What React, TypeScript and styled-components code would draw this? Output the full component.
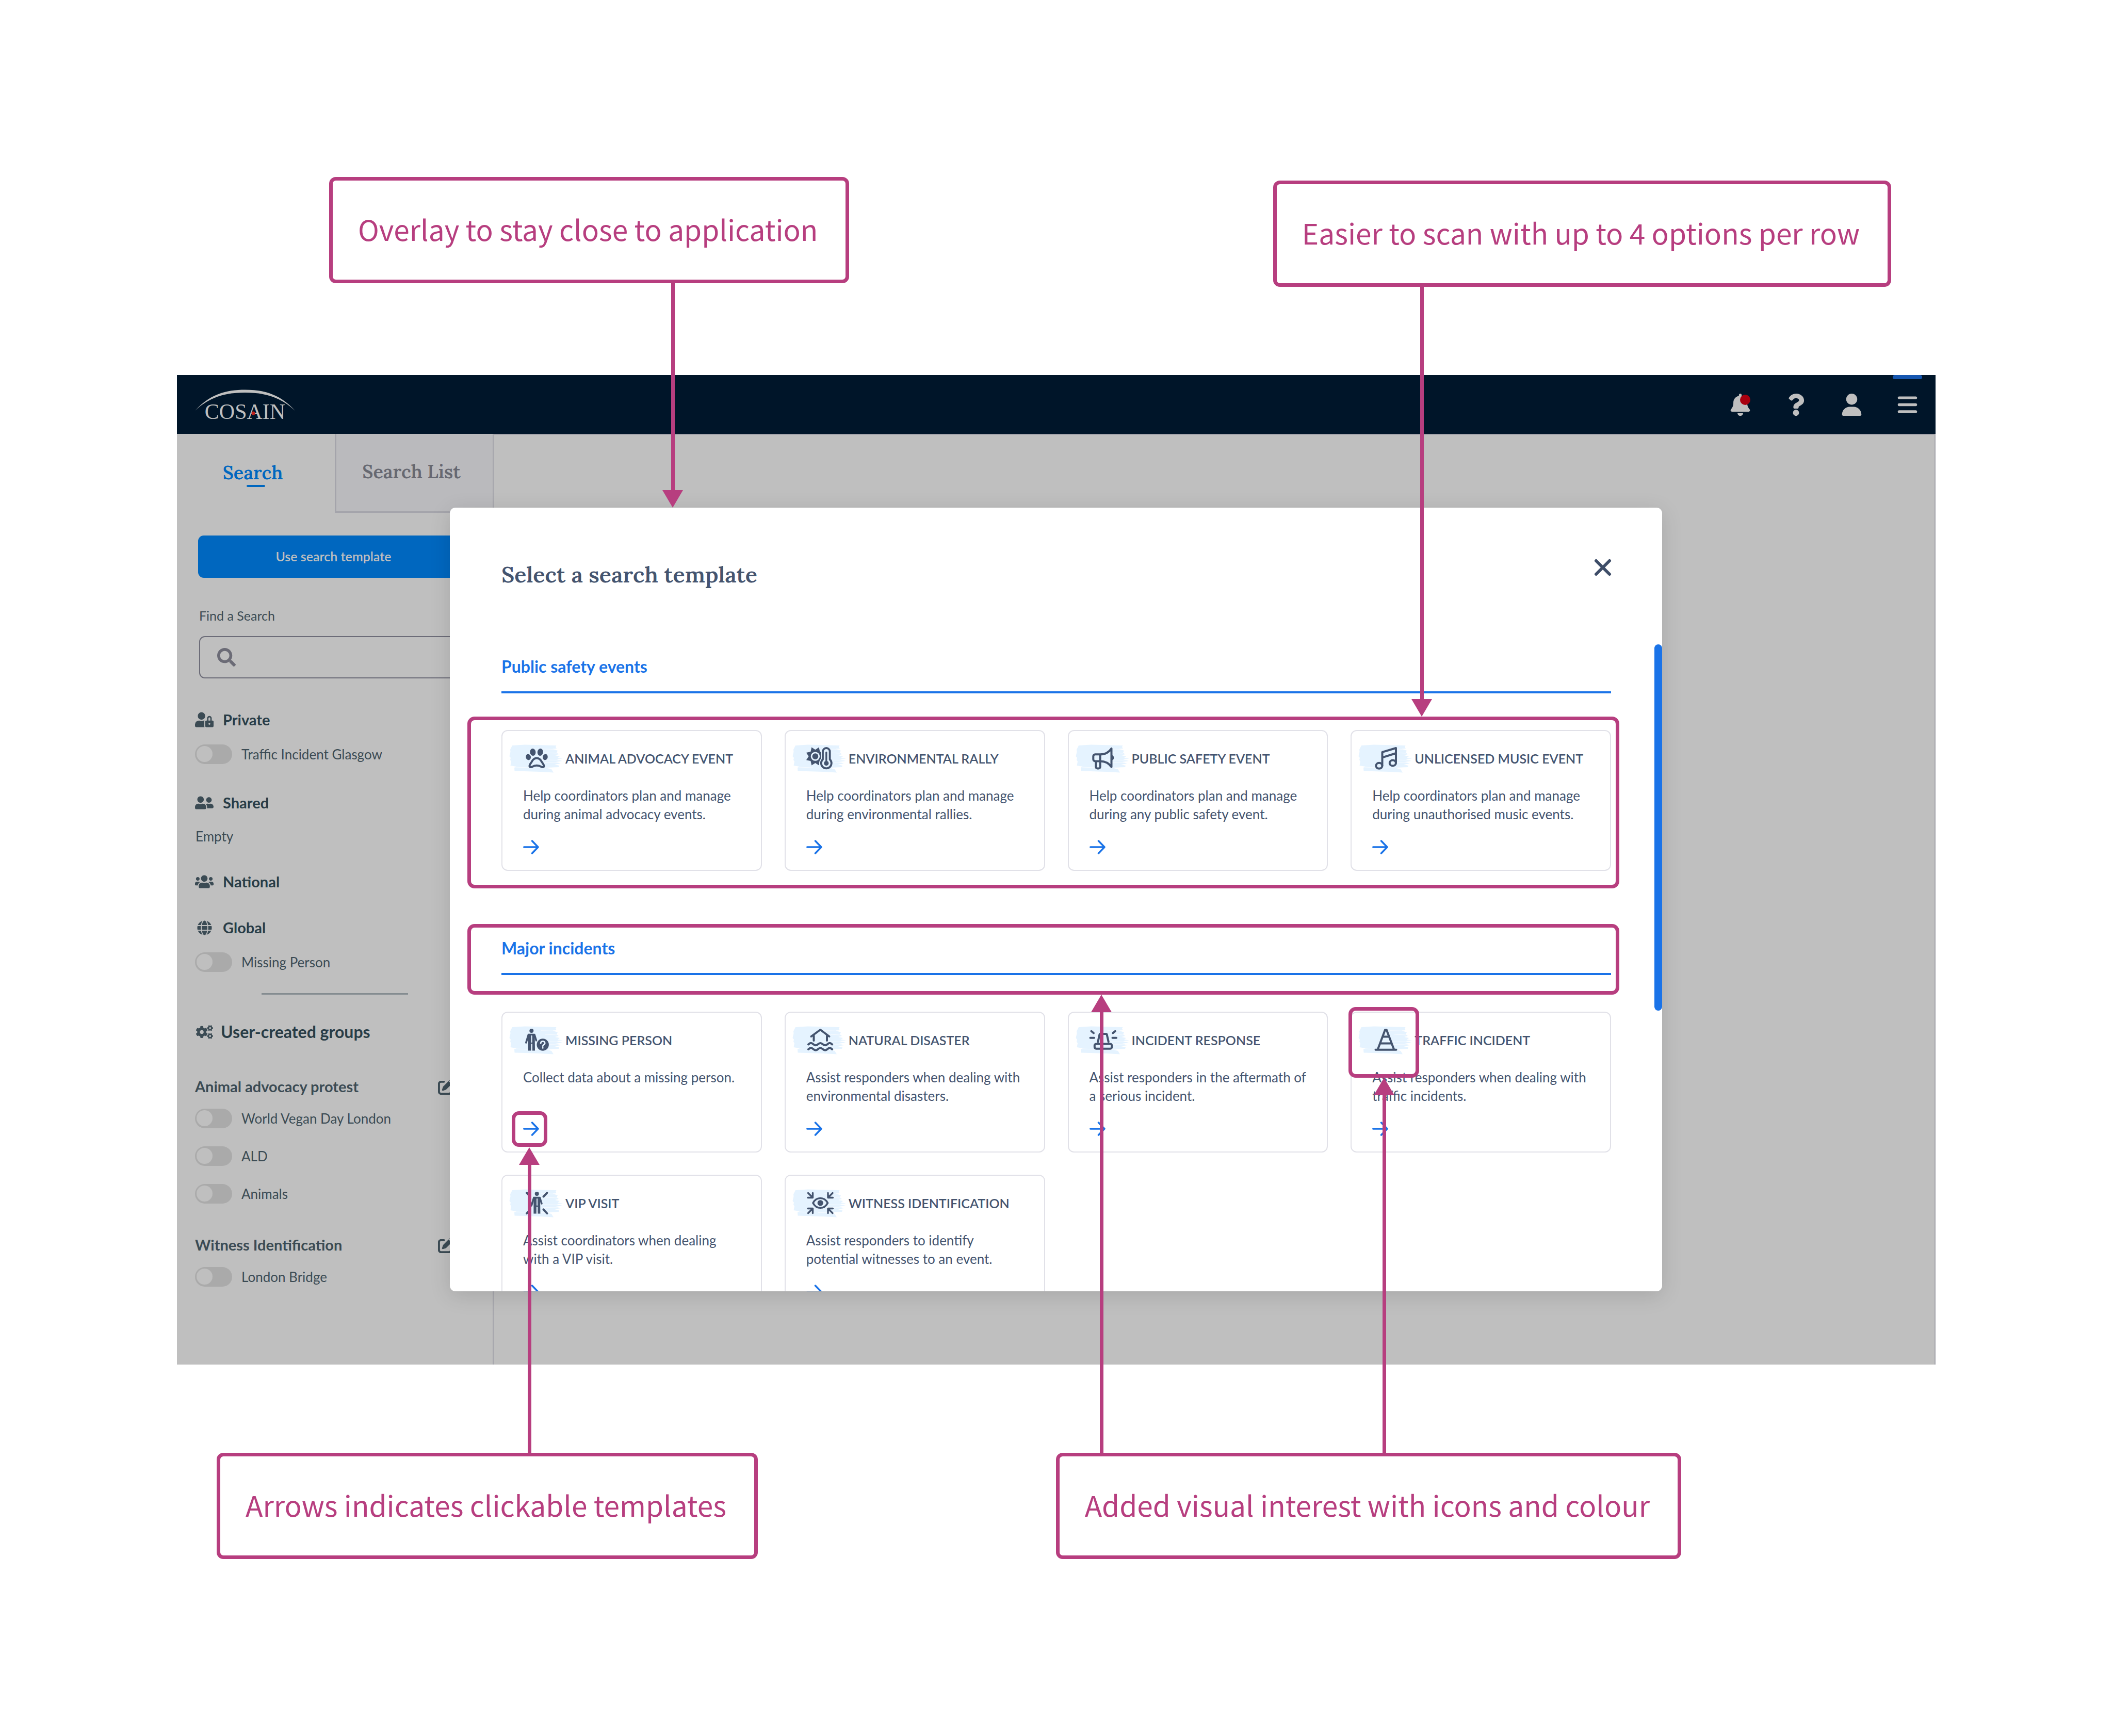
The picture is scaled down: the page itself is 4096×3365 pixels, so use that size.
import React from "react";
import styled, { createGlobalStyle } from "styled-components";
import { FaBell, FaUser, FaBars, FaPenToSquare } from "react-icons/fa6";
import { FaQuestion, FaSearch, FaUserLock, FaUserFriends, FaUsers, FaGlobe, FaCogs } from "react-icons/fa";

const accent = "#b73e7f";
const blue = "#1a73e8";
const slate = "#44546f";
const dim = "#bfbfbf";
const line = "#a4a4ab";
const wash = "#e5f3ff";

const sans = `Lato, "Liberation Sans", sans-serif`;
const serif = `Lora, "Noto Serif", "Liberation Serif", serif`;
const note = `"Source Sans Pro", "Noto Sans CJK SC", "Noto Sans", sans-serif`;

const GlobalStyle = createGlobalStyle`
  *, *::before, *::after { box-sizing: border-box; }
  body { margin: 0; background: #fff; font-family: ${sans}; color: ${slate}; }
  h1, h2, h3, p, ul { margin: 0; padding: 0; font-weight: inherit; }
  ul { list-style: none; }
  button { border: 0; padding: 0; background: none; font: inherit; color: inherit; cursor: pointer; }
`;

/* ---------- page and callouts ---------- */

const Page = styled.div`
  min-height: 100vh;
  padding: 343px 344px 343px 343px;
`;

const CalloutRow = styled.div<{ $side: "top" | "bottom" }>`
  display: flex;
  justify-content: space-between;
  align-items: flex-start;
  padding: ${(p) => (p.$side === "top" ? "0 86px 0 295px" : "0 493px 0 77px")};
  margin: ${(p) => (p.$side === "top" ? "0 0 171px" : "171px 0 0")};
`;

const Callout = styled.p<{ $lowered?: boolean }>`
  margin-top: ${(p) => (p.$lowered ? "7px" : "0")};
  padding: 51px 54px 57px 49px;
  border: 7px solid ${accent};
  border-radius: 13px;
  background: #fff;
  color: ${accent};
  font-family: ${note};
  font-size: 55px;
  line-height: 84px;
  white-space: nowrap;
`;

/* ---------- application shell ---------- */

const Shell = styled.div`
  background: ${dim};
`;

const TopBar = styled.header`
  display: flex;
  align-items: stretch;
  justify-content: space-between;
  height: 114px;
  padding: 0 26px 0 35px;
  background: #001529;
`;

const Logo = styled.svg`
  width: 194px;
  height: 114px;
`;

const TopActions = styled.nav`
  display: flex;
  gap: 51px;
`;

const TopAction = styled.button<{ $active?: boolean }>`
  display: flex;
  align-items: center;
  justify-content: center;
  position: relative;
  width: 57px;
  color: ${dim};
  font-size: 43px;

  &::before {
    content: "";
    display: ${(p) => (p.$active ? "block" : "none")};
    position: absolute;
    top: 0;
    left: 0;
    right: 0;
    height: 8px;
    border-radius: 4px;
    background: #1556b0;
  }
`;

const AlertDot = styled.span`
  position: absolute;
  top: 38px;
  right: 9px;
  width: 20px;
  height: 20px;
  border-radius: 50%;
  background: #a8000f;
`;

const Body = styled.div`
  display: flex;
  position: relative;
`;

const Sidebar = styled.aside`
  width: 612px;
  padding-bottom: 151px;
  color: #3b4b54;
`;

const Canvas = styled.div`
  flex: 1;
  border: 2px solid ${line};
  border-bottom: 0;
`;

const Tabs = styled.div`
  display: grid;
  grid-template-columns: 306px 1fr;
  height: 153px;
`;

const Tab = styled.button<{ $active?: boolean }>`
  position: relative;
  padding: 0 12px 4px 0;
  border: 0 solid ${line};
  border-width: ${(p) => (p.$active ? "0" : "0 0 3px 3px")};
  background: ${(p) => (p.$active ? "transparent" : "#bababd")};
  color: ${(p) => (p.$active ? "#0067bf" : "#666871")};
  font-family: ${serif};
  font-size: 36px;
  font-weight: 600;

  &::after {
    content: "";
    display: ${(p) => (p.$active ? "block" : "none")};
    position: absolute;
    left: 50%;
    bottom: 50px;
    width: 36px;
    height: 4px;
    margin-left: -18px;
    border-radius: 2px;
    background: #0067bf;
  }
`;

const SearchPanel = styled.div`
  padding: 44px 46px 0 41px;
`;

const TemplateButton = styled.button`
  width: 100%;
  height: 82px;
  padding-bottom: 2px;
  border-radius: 11px;
  background: #0067bf;
  color: ${dim};
  font-size: 25px;
  font-weight: 600;
`;

const FieldLabel = styled.label`
  display: block;
  margin: 57px 0 24px 2px;
  font-size: 25px;
  line-height: 32px;
`;

const SearchField = styled.div`
  display: flex;
  align-items: center;
  gap: 20px;
  height: 82px;
  margin-left: 2px;
  padding: 0 33px;
  border: 2px solid #6c6c78;
  border-radius: 11px;
  color: #6b6b76;
  font-size: 36px;
`;

const SearchInput = styled.input`
  flex: 1;
  min-width: 0;
  border: 0;
  outline: 0;
  background: transparent;
  color: #3b4b54;
  font: 25px ${sans};
`;

const Group = styled.section<{ $gap: number }>`
  margin-top: ${(p) => p.$gap}px;
  padding: 0 75px 0 35px;
`;

const GroupTitle = styled.h3<{ $large?: boolean }>`
  display: flex;
  align-items: center;
  gap: ${(p) => (p.$large ? 14 : 18)}px;
  color: #283c46;
  font-size: ${(p) => (p.$large ? 32 : 29)}px;
  font-weight: 700;
  line-height: ${(p) => (p.$large ? 38 : 36)}px;
`;

const GroupIcon = styled.span`
  display: flex;
  justify-content: center;
  width: 36px;
  color: #3b4b54;
  font-size: 29px;
`;

const CustomTitle = styled.h3`
  display: flex;
  align-items: center;
  justify-content: space-between;
  font-size: 29px;
  font-weight: 700;
  line-height: 36px;
`;

const EditButton = styled.button`
  display: flex;
  font-size: 31px;
`;

const ToggleList = styled.ul<{ $tight?: boolean }>`
  display: grid;
  gap: 35px;
  margin-top: ${(p) => (p.$tight ? 25 : 30)}px;
`;

const ToggleLabel = styled.label`
  display: flex;
  align-items: center;
  gap: 18px;
  height: 38px;
  font-size: 26px;
`;

const Toggle = styled.input`
  appearance: none;
  width: 72px;
  height: 38px;
  margin: 0;
  border-radius: 19px;
  background: #aaa;

  &::before {
    content: "";
    display: block;
    width: 31px;
    height: 31px;
    margin: 3px;
    border-radius: 50%;
    background: ${dim};
  }

  &:checked::before {
    margin-left: 38px;
  }
`;

const EmptyNote = styled.p`
  margin-top: 30px;
  padding-left: 1px;
  font-size: 26px;
  line-height: 34px;
`;

const Divider = styled.hr`
  width: 284px;
  height: 3px;
  margin: 41px 0 0 164px;
  border: 0;
  background: #848c90;
`;

/* ---------- dialog ---------- */

const DialogFrame = styled.div`
  position: absolute;
  top: 143px;
  bottom: 142px;
  left: 529px;
  right: 530px;
`;

const Dialog = styled.section`
  display: flex;
  flex-direction: column;
  position: relative;
  height: 100%;
  border-radius: 11px;
  background: #fff;
  box-shadow: 0 8px 40px rgba(0, 0, 0, 0.13);
  overflow: hidden;
`;

const DialogHeader = styled.div`
  display: flex;
  align-items: flex-start;
  justify-content: space-between;
  padding: 99px 98px 110px 100px;
`;

const DialogTitle = styled.h2`
  margin-top: 5px;
  font-family: ${serif};
  font-size: 43px;
  font-weight: 600;
  line-height: 51px;
`;

const CloseButton = styled.button`
  display: flex;
  color: #3e4d68;
`;

const DialogBody = styled.div`
  flex: 1;
  min-height: 0;
  position: relative;
  padding: 23px 99px 0 100px;
  overflow: hidden;
`;

const ScrollThumb = styled.div`
  position: absolute;
  top: 0;
  right: 0;
  width: 15px;
  height: 710px;
  border-radius: 8px;
  background: ${blue};
`;

const Category = styled.section`
  & + & {
    margin-top: 130px;
  }
`;

const CategoryTitle = styled.h3`
  padding-bottom: 28px;
  border-bottom: 4px solid ${blue};
  color: ${blue};
  font-size: 32px;
  font-weight: 700;
  line-height: 40px;
`;

const CardGrid = styled.div`
  display: grid;
  grid-template-columns: repeat(4, 1fr);
  gap: 43px 44px;
  margin-top: 71px;
`;

const Card = styled.article`
  padding: 25px 13px 30px;
  border: 2px solid #e1e1e8;
  border-radius: 12px;
`;

const CardHead = styled.div`
  display: flex;
  align-items: center;
  gap: 5px;
`;

const CardIcon = styled.svg`
  flex: none;
  width: 104px;
  height: 56px;
`;

const CardTitle = styled.h3`
  font-size: 25px;
  font-weight: 600;
  line-height: 36px;
  text-transform: uppercase;
  white-space: nowrap;
`;

const CardText = styled.p`
  min-height: 72px;
  margin: 26px 27px 0;
  font-size: 26px;
  line-height: 36px;
`;

const CardLink = styled.a`
  display: block;
  width: 31px;
  height: 28px;
  margin: 32px 27px 0;
  color: ${blue};
`;

/* ---------- annotations over the dialog ---------- */

const NoteLayer = styled.div`
  position: absolute;
  inset: 0;
  pointer-events: none;
`;

const Highlight = styled.div<{ $x: number; $y: number; $w: number; $h: number }>`
  position: absolute;
  left: ${(p) => p.$x}px;
  top: ${(p) => p.$y}px;
  width: ${(p) => p.$w}px;
  height: ${(p) => p.$h}px;
  border: 7px solid ${accent};
  border-radius: 14px;
`;

const Connector = styled.div<{ $x: number; $from: number; $to: number; $up?: boolean }>`
  position: absolute;
  left: ${(p) => p.$x - 20}px;
  top: ${(p) => p.$from}px;
  width: 40px;
  height: ${(p) => p.$to - p.$from}px;
  background: ${accent};
  clip-path: ${(p) =>
    p.$up
      ? "polygon(20px 0, 40px 34px, 24px 34px, 24px 100%, 17px 100%, 17px 34px, 0 34px)"
      : "polygon(17px 0, 24px 0, 24px calc(100% - 34px), 40px calc(100% - 34px), 20px 100%, 0 calc(100% - 34px), 17px calc(100% - 34px))"};
`;

/* ---------- drawings ---------- */

const Standing = ({ x }: { x: number }) => (
  <g transform={`translate(${x} 0)`}>
    <circle cx="11.3" cy="4" r="4" fill={slate} stroke="none" />
    <path d="M5.5 11.5H17l3.6 11.5M5.5 11.5L0.8 27" strokeWidth="3.6" />
    <path d="M5 10h12.6l.4 32.5h-5V29h-2.6v13.5H5z" fill={slate} stroke="none" />
    <path d="M11.7 14v12" stroke={wash} strokeWidth="2" />
  </g>
);

const icons: Record<string, React.ReactNode> = {
  paw: (
    <>
      <g fill={slate} stroke="none">
        <ellipse cx="5.2" cy="19.5" rx="4.8" ry="5.8" transform="rotate(-14 5.2 19.5)" />
        <ellipse cx="13.9" cy="10" rx="5.5" ry="7" transform="rotate(-6 13.9 10)" />
        <ellipse cx="28.3" cy="10" rx="5.5" ry="7" transform="rotate(6 28.3 10)" />
        <ellipse cx="37.9" cy="19.5" rx="4.8" ry="5.8" transform="rotate(14 37.9 19.5)" />
      </g>
      <path d="M21.4 21.5C16 21.5 13.5 25 11.5 29C9.5 32 7.3 34.5 7.5 37C7.8 39.5 10.5 39.3 13 38.2C18 34.8 25 34.8 30 38.2C32.5 39.3 35.2 39.5 35.5 37C35.6 34.5 33.3 32 31.3 29C29.3 25 26.8 21.5 21.4 21.5Z" />
    </>
  ),
  climate: (
    <>
      <path
        fill={slate}
        stroke="none"
        d="M5.3 0.6L12.4 5.3L19.5 0.6L21.4 9.1L29.9 11L25.2 18.1L29.9 25.2L21.4 27.1L19.5 35.6L12.4 30.9L5.3 35.6L3.4 27.1L-5.1 25.2L-0.4 18.1L-5.1 11L3.4 9.1Z"
      />
      <circle cx="12.4" cy="18.1" r="7.3" stroke={wash} strokeWidth="2.8" />
      <path
        d="M27 24V8.5a6.8 6.8 0 0 1 13.6 0V24a10.4 10.4 0 1 1-13.6 0z"
        fill={wash}
        stroke={wash}
        strokeWidth="7"
      />
      <path d="M27 24V8.8a6.8 6.8 0 0 1 13.6 0V24a10 10 0 1 1-13.6 0z" strokeWidth="3.8" />
      <path d="M33.8 10.5V30" strokeWidth="3.4" />
      <circle cx="33.8" cy="31.6" r="4.6" fill={slate} stroke="none" />
    </>
  ),
  megaphone: (
    <>
      <path d="M15.7 14.3H6a3.7 3.7 0 0 0-3.7 3.7v5.8A3.7 3.7 0 0 0 6 27.5h9.7M15.7 14.3v13.2M15.7 14.3C25 14.3 33 9.5 37.5 2.8V38.7C33 32 25 27.5 15.7 27.5" />
      <path d="M7.3 28v10.5a3 3 0 0 0 3 3h2.4a3 3 0 0 0 3-3V28" />
      <path d="M38 15.6a5.2 5.2 0 0 1 0 10.2z" fill={slate} stroke="none" />
    </>
  ),
  music: (
    <>
      <ellipse cx="8.4" cy="36.3" rx="6.1" ry="5.5" />
      <ellipse cx="34.8" cy="31" rx="6.1" ry="5.5" />
      <path d="M14.5 36V9.8L41 2v29M14.5 20.3L41 12" />
    </>
  ),
  missing: (
    <>
      <Standing x={0} />
      <circle cx="33" cy="31" r="13.5" fill={wash} stroke="none" />
      <circle cx="33.2" cy="31" r="11.7" fill={slate} stroke="none" />
      <path d="M29.2 28.3c0-5.2 8-5.2 8 0c0 3-4 2.7-4 5.5M33.2 37v.4" stroke={wash} strokeWidth="2.8" />
    </>
  ),
  flood: (
    <>
      <path d="M4.5 15L22.2 2L39.5 15M9.5 13.5V23M35 13.5V23" />
      <path d="M-1 30.5c4-3.5 6-3.5 9.5-.5s6 3 9.3 0s5.5-3 9 0s6 3 9.3 0s5-3 9 .5M-1 40c4-3.5 6-3.5 9.5-.5s6 3 9.3 0s5.5-3 9 0s6 3 9.3 0s5-3 9 .5" />
    </>
  ),
  siren: (
    <>
      <path d="M11.3 25.5L14.4 11.5a2 2 0 0 1 2-1.5H26.7a2 2 0 0 1 2 1.5L31.8 25.5" />
      <rect x="4.8" y="29.5" width="33.4" height="9.3" rx="3" />
      <path d="M-3.5 17.8H4M39.5 17.8H47M-1.5 4.8L3 8.5M44.8 4.8L40.3 8.5M19.5 18v7" />
    </>
  ),
  cone: (
    <path d="M1.5 40.8H41.5M5.5 40.8L20 2.2H22.8L37.4 40.8M15.5 15.5H27.5M10.5 28.5H32.5" />
  ),
  vip: (
    <>
      <Standing x={10.4} />
      <path d="M34.5 9.5L41.5 2.2M34.5 34.3L41.5 42M9 9.5L2 2.2M9 34.3L2 42" />
    </>
  ),
  witness: (
    <>
      <path d="M8 21.8C12 14.5 16 12.5 22.2 12.5S32.5 14.5 36.5 21.8C32.5 29 28.5 31.3 22.2 31.3S12 29 8 21.8Z" strokeWidth="3.6" />
      <circle cx="22.2" cy="21.8" r="5.6" fill={slate} stroke="none" />
      <path d="M-1.5 2.5L7 11M-2 11.5H7.5V2.5M46 2.5L37.5 11M46.5 11.5H37V2.5M-1.5 41.5L7 33M-2 32.5H7.5V41.5M46 41.5L37.5 33M46.5 32.5H37V41.5" strokeWidth="3.4" />
    </>
  ),
};

const TemplateIcon = ({ name }: { name: string }) => (
  <CardIcon viewBox="0 0 104 56" aria-hidden="true">
    <path
      fill={wash}
      d="M6 3L30 1.5L91.5 3L90 6L92 9L84 9.5L94 13L92 17L96 20L89 22L98 24L94 27L104 28.5L92 30L103 33L90 35L100 38L88 40L97 42L96 45L84 45.5L74 47L82 49L86 55.5L60 54L10.5 52.5L10 46L14 44L2.5 42L4 34L2 31L3 27L0.5 24L2.5 15L2 11Z"
    />
    <path stroke="#fff" strokeWidth="1" opacity="0.7" d="M62 9.8L94 10.5M70 17L92 18M58 31L102 31.5M66 36.5L94 36M50 46.5L82 46M12 45L40 46" />
    <g
      transform="translate(32 6)"
      fill="none"
      stroke={slate}
      strokeWidth="4"
      strokeLinecap="round"
      strokeLinejoin="round"
    >
      {icons[name]}
    </g>
  </CardIcon>
);

const ArrowRight = () => (
  <svg width="31" height="28" viewBox="0 0 31 28" fill="none" stroke="currentColor" strokeWidth="3.5" strokeLinecap="round" strokeLinejoin="round" aria-hidden="true">
    <path d="M1.8 14H29M17.5 2L29 14L17.5 26" />
  </svg>
);

/* ---------- data ---------- */

type Template = { icon: string; title: string; text: string };

const categories: { name: string; templates: Template[] }[] = [
  {
    name: "Public safety events",
    templates: [
      { icon: "paw", title: "Animal advocacy event", text: "Help coordinators plan and manage during animal advocacy events." },
      { icon: "climate", title: "Environmental rally", text: "Help coordinators plan and manage during environmental rallies." },
      { icon: "megaphone", title: "Public safety event", text: "Help coordinators plan and manage during any public safety event." },
      { icon: "music", title: "Unlicensed music event", text: "Help coordinators plan and manage during unauthorised music events." },
    ],
  },
  {
    name: "Major incidents",
    templates: [
      { icon: "missing", title: "Missing person", text: "Collect data about a missing person." },
      { icon: "flood", title: "Natural disaster", text: "Assist responders when dealing with environmental disasters." },
      { icon: "siren", title: "Incident response", text: "Assist responders in the aftermath of a serious incident." },
      { icon: "cone", title: "Traffic incident", text: "Assist responders when dealing with traffic incidents." },
      { icon: "vip", title: "VIP visit", text: "Assist coordinators when dealing with a VIP visit." },
      { icon: "witness", title: "Witness identification", text: "Assist responders to identify potential witnesses to an event." },
    ],
  },
];

const Toggles = ({ names, tight }: { names: string[]; tight?: boolean }) => (
  <ToggleList $tight={tight}>
    {names.map((name) => (
      <li key={name}>
        <ToggleLabel>
          <Toggle type="checkbox" />
          {name}
        </ToggleLabel>
      </li>
    ))}
  </ToggleList>
);

export default function App() {
  return (
    <Page>
      <GlobalStyle />
      <CalloutRow $side="top">
        <Callout>Overlay to stay close to application</Callout>
        <Callout $lowered>Easier to scan with up to 4 options per row</Callout>
      </CalloutRow>

      <Shell>
        <TopBar>
          <Logo viewBox="0 0 194 114" role="img" aria-label="Cosain">
            <path d="M0 69C30 36 62 28.5 97 28.5C132 28.5 164 36 194 69C164 41 132 34 97 34C62 34 30 41 0 69Z" fill={dim} />
            <text x="97" y="85" textAnchor="middle" fontFamily="Liberation Serif, serif" fontSize="42" fill={dim}>
              COSAIN
            </text>
            <circle cx="113" cy="74" r="3.5" fill="#c0201c" />
          </Logo>
          <TopActions>
            <TopAction aria-label="Notifications">
              <FaBell />
              <AlertDot />
            </TopAction>
            <TopAction aria-label="Help">
              <FaQuestion />
            </TopAction>
            <TopAction aria-label="Account">
              <FaUser />
            </TopAction>
            <TopAction aria-label="Menu" $active>
              <FaBars />
            </TopAction>
          </TopActions>
        </TopBar>

        <Body>
          <Sidebar>
            <Tabs>
              <Tab $active>Search</Tab>
              <Tab>Search List</Tab>
            </Tabs>
            <SearchPanel>
              <TemplateButton>Use search template</TemplateButton>
              <FieldLabel htmlFor="find-search">Find a Search</FieldLabel>
              <SearchField>
                <FaSearch />
                <SearchInput id="find-search" type="text" />
              </SearchField>
            </SearchPanel>

            <Group $gap={62}>
              <GroupTitle>
                <GroupIcon>
                  <FaUserLock size={36} />
                </GroupIcon>
                Private
              </GroupTitle>
              <Toggles names={["Traffic Incident Glasgow"]} />
            </Group>
            <Group $gap={57}>
              <GroupTitle>
                <GroupIcon>
                  <FaUserFriends size={36} />
                </GroupIcon>
                Shared
              </GroupTitle>
              <EmptyNote>Empty</EmptyNote>
            </Group>
            <Group $gap={53}>
              <GroupTitle>
                <GroupIcon>
                  <FaUsers size={36} />
                </GroupIcon>
                National
              </GroupTitle>
            </Group>
            <Group $gap={53}>
              <GroupTitle>
                <GroupIcon>
                  <FaGlobe />
                </GroupIcon>
                Global
              </GroupTitle>
              <Toggles names={["Missing Person"]} />
            </Group>

            <Divider />

            <Group $gap={53}>
              <GroupTitle $large>
                <GroupIcon>
                  <FaCogs size={33} />
                </GroupIcon>
                User-created groups
              </GroupTitle>
            </Group>
            <Group $gap={69}>
              <CustomTitle>
                Animal advocacy protest
                <EditButton aria-label="Edit Animal advocacy protest">
                  <FaPenToSquare />
                </EditButton>
              </CustomTitle>
              <Toggles tight names={["World Vegan Day London", "ALD", "Animals"]} />
            </Group>
            <Group $gap={62}>
              <CustomTitle>
                Witness Identification
                <EditButton aria-label="Edit Witness Identification">
                  <FaPenToSquare />
                </EditButton>
              </CustomTitle>
              <Toggles tight names={["London Bridge"]} />
            </Group>
          </Sidebar>
          <Canvas />

          <DialogFrame>
            <Dialog role="dialog" aria-labelledby="dialog-title">
              <DialogHeader>
                <DialogTitle id="dialog-title">Select a search template</DialogTitle>
                <CloseButton aria-label="Close">
                  <svg width="34" height="34" viewBox="0 0 34 34" stroke="currentColor" strokeWidth="6" strokeLinecap="round">
                    <path d="M4 4L30 30M30 4L4 30" />
                  </svg>
                </CloseButton>
              </DialogHeader>
              <DialogBody>
                {categories.map((category) => (
                  <Category key={category.name}>
                    <CategoryTitle>{category.name}</CategoryTitle>
                    <CardGrid>
                      {category.templates.map((t) => (
                        <Card key={t.title}>
                          <CardHead>
                            <TemplateIcon name={t.icon} />
                            <CardTitle>{t.title}</CardTitle>
                          </CardHead>
                          <CardText>{t.text}</CardText>
                          <CardLink href="#" aria-label={t.title}>
                            <ArrowRight />
                          </CardLink>
                        </Card>
                      ))}
                    </CardGrid>
                  </Category>
                ))}
                <ScrollThumb />
              </DialogBody>
            </Dialog>

            <NoteLayer>
              <Highlight $x={34} $y={405} $w={2233} $h={333} />
              <Highlight $x={34} $y={807} $w={2233} $h={137} />
              <Highlight $x={120} $y={1170} $w={69} $h={69} />
              <Highlight $x={1742} $y={968} $w={137} $h={137} />
              <Connector $x={432} $from={-435} $to={0} />
              <Connector $x={1884} $from={-428} $to={405} />
              <Connector $x={154} $from={1240} $to={1834} $up />
              <Connector $x={1263} $from={944} $to={1834} $up />
              <Connector $x={1811} $from={1105} $to={1834} $up />
            </NoteLayer>
          </DialogFrame>
        </Body>
      </Shell>

      <CalloutRow $side="bottom">
        <Callout>Arrows indicates clickable templates</Callout>
        <Callout>Added visual interest with icons and colour</Callout>
      </CalloutRow>
    </Page>
  );
}
